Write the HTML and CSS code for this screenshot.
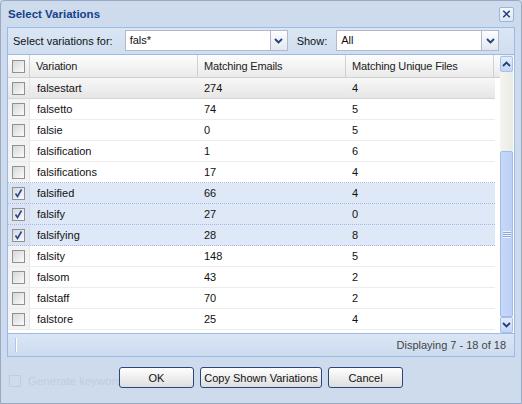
FILE: index.html
```html
<!DOCTYPE html>
<html>
<head>
<meta charset="utf-8">
<link rel="stylesheet" href="styles.css">
</head>
<body>
<div class="window">
  <div class="titlebar">
    <span class="title">Select Variations</span>
    <span class="close"><svg width="14" height="14" viewBox="0 0 14 14"><path d="M3.5 3.5 L10.5 10.5 M10.5 3.5 L3.5 10.5" stroke="#1f3d7a" stroke-width="1.6" fill="none"/></svg></span>
  </div>
  <div class="panel">
    <div class="toolbar">
      <span class="label">Select variations for:</span>
      <div class="combo combo-a"><span class="combo-text">fals*</span><span class="trigger"><svg width="9" height="6" viewBox="0 0 9 6"><path d="M1 1 L4.5 4.5 L8 1" stroke="#23407c" stroke-width="1.8" fill="none"/></svg></span></div>
      <span class="label label-show">Show:</span>
      <div class="combo combo-b"><span class="combo-text">All</span><span class="trigger"><svg width="9" height="6" viewBox="0 0 9 6"><path d="M1 1 L4.5 4.5 L8 1" stroke="#23407c" stroke-width="1.8" fill="none"/></svg></span></div>
    </div>
    <div class="grid">
      <div class="grid-main">
        <div class="hrow">
          <div class="hcell c0"><span class="cb"></span></div>
          <div class="hcell c1">Variation</div>
          <div class="hcell c2">Matching Emails</div>
          <div class="hcell c3">Matching Unique Files</div>
          <div class="hcell cfill"></div>
        </div>
        <div class="row hover"><div class="cell c0"><span class="cb"></span></div><div class="cell c1">falsestart</div><div class="cell c2">274</div><div class="cell c3">4</div></div>
        <div class="row"><div class="cell c0"><span class="cb"></span></div><div class="cell c1">falsetto</div><div class="cell c2">74</div><div class="cell c3">5</div></div>
        <div class="row"><div class="cell c0"><span class="cb"></span></div><div class="cell c1">falsie</div><div class="cell c2">0</div><div class="cell c3">5</div></div>
        <div class="row"><div class="cell c0"><span class="cb"></span></div><div class="cell c1">falsification</div><div class="cell c2">1</div><div class="cell c3">6</div></div>
        <div class="row presel"><div class="cell c0"><span class="cb"></span></div><div class="cell c1">falsifications</div><div class="cell c2">17</div><div class="cell c3">4</div></div>
        <div class="row sel"><div class="cell c0"><span class="cb checked"><svg width="11" height="11" viewBox="0 0 11 11"><path d="M2.5 5.5 L4.5 8.5 L8.5 1.5" stroke="#2c4596" stroke-width="1.6" fill="none"/></svg></span></div><div class="cell c1">falsified</div><div class="cell c2">66</div><div class="cell c3">4</div></div>
        <div class="row sel"><div class="cell c0"><span class="cb checked"><svg width="11" height="11" viewBox="0 0 11 11"><path d="M2.5 5.5 L4.5 8.5 L8.5 1.5" stroke="#2c4596" stroke-width="1.6" fill="none"/></svg></span></div><div class="cell c1">falsify</div><div class="cell c2">27</div><div class="cell c3">0</div></div>
        <div class="row sel"><div class="cell c0"><span class="cb checked"><svg width="11" height="11" viewBox="0 0 11 11"><path d="M2.5 5.5 L4.5 8.5 L8.5 1.5" stroke="#2c4596" stroke-width="1.6" fill="none"/></svg></span></div><div class="cell c1">falsifying</div><div class="cell c2">28</div><div class="cell c3">8</div></div>
        <div class="row"><div class="cell c0"><span class="cb"></span></div><div class="cell c1">falsity</div><div class="cell c2">148</div><div class="cell c3">5</div></div>
        <div class="row"><div class="cell c0"><span class="cb"></span></div><div class="cell c1">falsom</div><div class="cell c2">43</div><div class="cell c3">2</div></div>
        <div class="row"><div class="cell c0"><span class="cb"></span></div><div class="cell c1">falstaff</div><div class="cell c2">70</div><div class="cell c3">2</div></div>
        <div class="row"><div class="cell c0"><span class="cb"></span></div><div class="cell c1">falstore</div><div class="cell c2">25</div><div class="cell c3">4</div></div>
      </div>
      <div class="scrollbar">
        <div class="sbtn"><svg width="9" height="6" viewBox="0 0 9 6"><path d="M1 5 L4.5 1.5 L8 5" stroke="#23407c" stroke-width="1.8" fill="none"/></svg></div>
        <div class="track">
          <div class="thumb"><span class="grip"></span></div>
        </div>
        <div class="sbtn"><svg width="9" height="6" viewBox="0 0 9 6"><path d="M1 1 L4.5 4.5 L8 1" stroke="#23407c" stroke-width="1.8" fill="none"/></svg></div>
      </div>
    </div>
    <div class="paging">
      <span class="sep"></span>
      <span class="display">Displaying 7 - 18 of 18</span>
    </div>
  </div>
  <div class="footer">
    <div class="ghost"><span class="ghost-cb"></span><span>Generate keywords</span></div>
    <button class="btn btn-ok">OK</button>
    <button class="btn btn-copy">Copy Shown Variations</button>
    <button class="btn btn-ok">Cancel</button>
  </div>
</div>
</body>
</html>
```

FILE: styles.css
```css
* { box-sizing: border-box; }
html, body { margin: 0; padding: 0; }
body {
  width: 522px;
  height: 404px;
  font-family: "Liberation Sans", Arial, sans-serif;
  font-size: 11px;
  color: #111;
  background: #cfdcee;
  overflow: hidden;
}
.window {
  width: 522px;
  height: 404px;
  border: 1px solid #99a9c1;
  border-radius: 4px 4px 0 0;
  background: #cedbec;
  padding: 0 6px;
  display: flex;
  flex-direction: column;
}
.titlebar {
  height: 26px;
  display: flex;
  align-items: center;
  justify-content: space-between;
  padding-left: 1px;
  padding-bottom: 1px;
}
.title {
  font-weight: bold;
  font-size: 11.5px;
  color: #15428b;
}
.close {
  width: 15px;
  height: 15px;
  margin-right: 1px;
  margin-top: 1px;
  border: 1px solid #9db5d9;
  border-radius: 2px;
  background: linear-gradient(#f5f8fc, #dbe6f4);
  display: flex;
  align-items: center;
  justify-content: center;
}
.panel {
  border: 1px solid #99bbe8;
  background: #dfe8f6;
  display: flex;
  flex-direction: column;
}
.toolbar {
  height: 27px;
  display: flex;
  align-items: center;
  padding-left: 5px;
  padding-bottom: 1px;
  background: linear-gradient(#dae6f4, #d0def0);
  border-bottom: 1px solid #99bbe8;
}
.label { color: #111; }
.label-show { margin-left: 9px; }
.combo {
  height: 21px;
  display: flex;
  margin-left: 12px;
}
.combo-a { width: 163px; }
.combo-b { width: 163px; margin-left: 9px; }
.combo-text {
  flex: 1;
  border: 1px solid #b5b8c8;
  background: #fff;
  padding: 3px 3px 0 4px;
}
.trigger {
  width: 17px;
  border: 1px solid #b5b8c8;
  border-left: none;
  background: linear-gradient(#fdfdfe, #e1e8f2);
  display: flex;
  align-items: center;
  justify-content: center;
}
.grid {
  display: flex;
  background: #fff;
  height: 278px;
}
.grid-main {
  flex: 1;
  display: flex;
  flex-direction: column;
}
.hrow {
  display: flex;
  height: 23px;
  background: linear-gradient(#fdfdfd, #eaeaea);
  border-bottom: 1px solid #d0d0d0;
  letter-spacing: -0.15px;
}
.hcell {
  display: flex;
  align-items: center;
  padding-left: 6px;
  border-right: 1px solid #d0d0d0;
  color: #222;
}
.hcell.cfill { flex: 1; border-right: none; }
.c0 { width: 22px; justify-content: center; padding-left: 0; }
.c1 { width: 168px; }
.c2 { width: 148px; }
.c3 { width: 148px; }
.hcell.c0 { justify-content: center; padding-left: 0; }
.row {
  display: flex;
  height: 21px;
  border-bottom: 1px solid #ececec;
  width: 487px;
}
.cell {
  display: flex;
  align-items: center;
  padding-left: 6px;
}
.cell.c0 {
  padding-left: 0;
  justify-content: center;
  background: #f3f3f3;
  border-right: 1px solid #e6e6e6;
}
.cell.c1 { padding-left: 7px; }
.row.hover {
  background: linear-gradient(#f7f7f7, #e6e6e6);
  border-bottom-color: #d6d6d6;
}
.row.hover .cell.c0 { background: transparent; }
.row.presel { border-bottom: 1px dotted #a3bae9; }
.row.sel {
  background: #dfe8f6;
  border-bottom: 1px dotted #a3bae9;
}
.row.sel .cell.c0 { background: #dae3f2; border-right-color: #d0dcf0; }
.cb {
  width: 13px;
  height: 13px;
  border: 1px solid #8e9196;
  background: linear-gradient(135deg, #d6d7d9, #fbfbfb);
  display: flex;
  align-items: center;
  justify-content: center;
}
.scrollbar {
  width: 15px;
  display: flex;
  flex-direction: column;
  background: linear-gradient(90deg, #f4f4f0, #ebebe5);
  margin-right: 1px;
  padding-top: 1px;
}
.sbtn {
  height: 16px;
  border: 1px solid #a9c0e4;
  border-radius: 2px;
  background: linear-gradient(#e3ecfb, #c4d6f6);
  display: flex;
  align-items: center;
  justify-content: center;
}
.track {
  flex: 1;
  display: flex;
  flex-direction: column;
  justify-content: flex-end;
}
.thumb {
  height: 166px;
  border: 1px solid #a2bbe6;
  border-radius: 2px;
  background: linear-gradient(90deg, #c6d8fa, #bcd0f6);
  display: flex;
  align-items: center;
  justify-content: center;
}
.grip {
  width: 8px;
  height: 7px;
  background: repeating-linear-gradient(#eef3fd 0 1px, #8eaadc 1px 2px);
}
.paging {
  height: 23px;
  background: linear-gradient(#dae6f4, #ccdbef);
  border-top: 1px solid #99bbe8;
  display: flex;
  align-items: center;
  justify-content: space-between;
  padding: 0 8px 0 7px;
}
.sep {
  width: 2px;
  height: 14px;
  border-left: 1px solid #aac8f0;
  border-right: 1px solid #fff;
}
.display { color: #444; }
.footer {
  position: relative;
  flex: 1;
  display: flex;
  justify-content: center;
  align-items: flex-start;
  gap: 6px;
  padding-top: 10px;
}
.ghost {
  position: absolute;
  left: 2px;
  top: 18px;
  display: flex;
  align-items: center;
  gap: 7px;
  color: #bfcde0;
  font-size: 11.5px;
}
.ghost-cb {
  width: 12px;
  height: 12px;
  border: 1px solid #bfcde0;
}
.btn {
  position: relative;
  height: 21px;
  border: 1px solid #29467d;
  border-radius: 3px;
  background: linear-gradient(#ffffff, #eeeeee 50%, #dedede);
  font-family: "Liberation Sans", Arial, sans-serif;
  font-size: 11px;
  color: #111;
  padding: 0;
}
.btn-ok { width: 75px; }
.btn-copy { width: 122px; }
```
